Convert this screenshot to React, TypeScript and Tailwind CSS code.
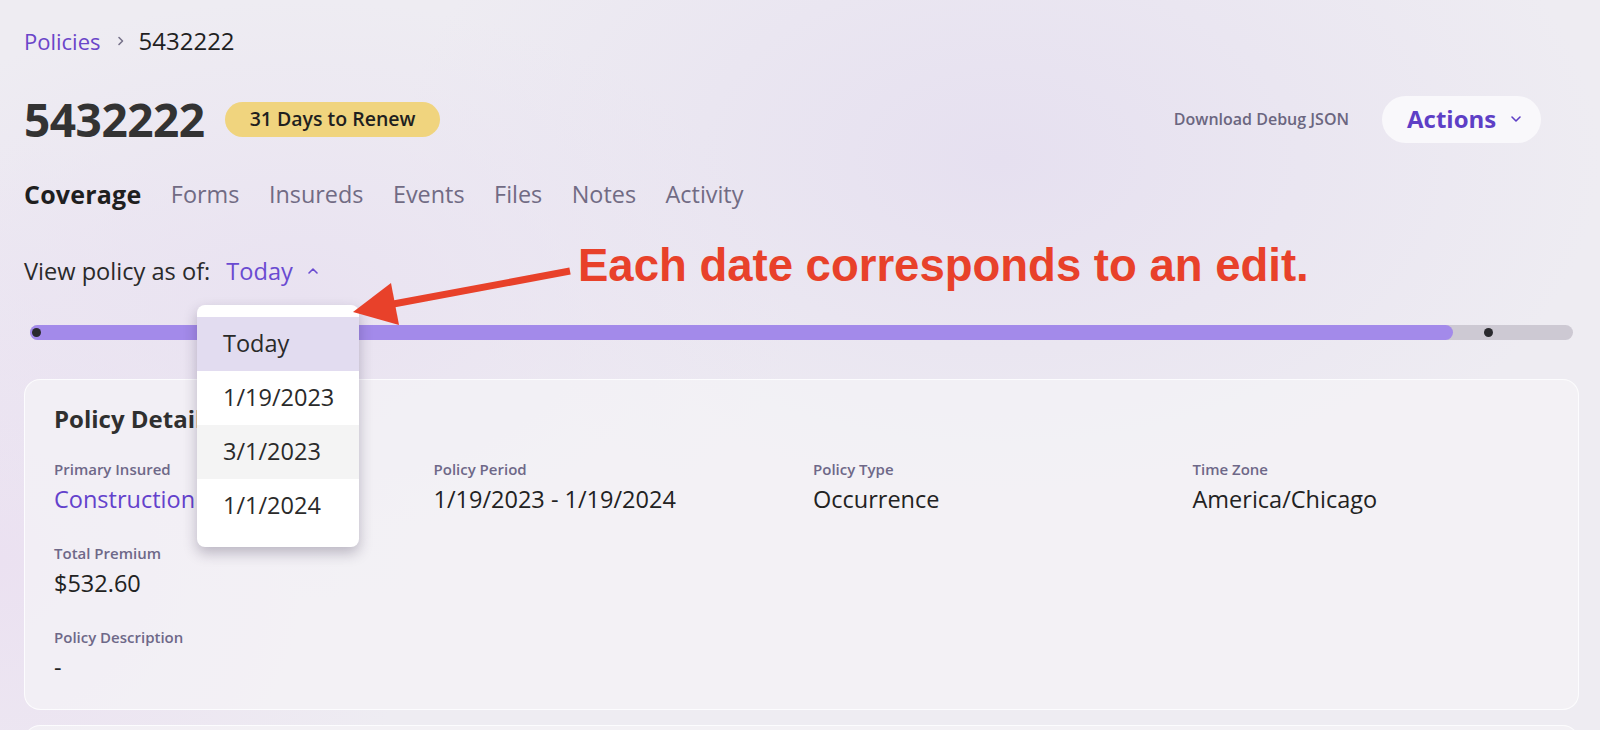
import React from "react";

const ChevronRight = ({ className = "" }: { className?: string }) => (
  <svg className={className} width="8" height="10" viewBox="0 0 8 10" fill="none">
    <path d="M2 1.5L5.5 5L2 8.5" stroke="currentColor" strokeWidth="1.6" strokeLinecap="round" strokeLinejoin="round" />
  </svg>
);
const ChevronUp = ({ className = "" }: { className?: string }) => (
  <svg className={className} width="12" height="8" viewBox="0 0 12 8" fill="none">
    <path d="M2 6L6 2L10 6" stroke="currentColor" strokeWidth="1.6" strokeLinecap="round" strokeLinejoin="round" />
  </svg>
);
const ChevronDown = ({ className = "" }: { className?: string }) => (
  <svg className={className} width="12" height="8" viewBox="0 0 12 8" fill="none">
    <path d="M2 2L6 6L10 2" stroke="currentColor" strokeWidth="1.6" strokeLinecap="round" strokeLinejoin="round" />
  </svg>
);

const Field = ({ label, value, link = false }: { label: string; value: string; link?: boolean }) => (
  <div className="flex flex-col">
    <div className="text-[15px] leading-[20px] font-semibold text-[#6e6888]">{label}</div>
    <div className={`mt-[4px] text-[23.5px] leading-[32px] ${link ? "text-[#6341cc]" : "text-[#222222]"}`}>{value}</div>
  </div>
);

export default function App() {
  const tabs = ["Forms", "Insureds", "Events", "Files", "Notes", "Activity"];
  return (
    <div className="relative w-full h-[730px] overflow-hidden font-['Open_Sans',sans-serif] bg-[#eeecf2]">
      <div className="pointer-events-none absolute inset-0 bg-[radial-gradient(ellipse_600px_380px_at_1000px_160px,#e6e0f0,transparent)]" />
      <div className="pointer-events-none absolute inset-0 bg-[radial-gradient(ellipse_420px_420px_at_0px_560px,#ebe1f1,transparent)]" />
      <div className="pointer-events-none absolute inset-0 bg-[radial-gradient(ellipse_500px_300px_at_300px_300px,#e9e2f1,transparent)]" />

      <div className="relative pl-[24px] pr-[21px] pt-[28px]">
        {/* Breadcrumb */}
        <div className="flex items-center h-[26px] leading-[26px]">
          <span className="text-[22px] text-[#6a45c9]">Policies</span>
          <ChevronRight className="ml-[16px] mr-[14px] text-[#77728a]" />
          <span className="text-[#1f1f1f] text-[24px]">5432222</span>
        </div>

        {/* Title row */}
        <div className="mt-[39px] flex items-center h-[52px]">
          <h1 className="text-[46px] leading-[52px] font-bold text-[#333333] tracking-[-0.5px]">5432222</h1>
          <span className="ml-[20px] inline-flex items-center h-[35px] px-[25px] rounded-full bg-[#f0d47e] text-[19.5px] font-semibold text-[#1f1f1f]">
            31 Days to Renew
          </span>
          <div className="ml-auto mr-[38px] flex items-center">
            <span className="text-[16px] font-semibold text-[#6b6680]">Download Debug JSON</span>
            <button className="ml-[33px] flex items-center h-[47px] w-[159px] pl-[25px] rounded-full bg-[#f9f8fb] text-[24px] font-bold text-[#5e3fc6]">
              Actions
              <ChevronDown className="ml-[14px] text-[#5e3fc6]" />
            </button>
          </div>
        </div>

        {/* Tabs */}
        <div className="mt-[33px] flex items-center gap-[29.5px] h-[32px] text-[23.4px] leading-[32px]">
          <span className="font-bold text-[25px] tracking-[0.2px] text-[#1f1f1f]">Coverage</span>
          {tabs.map((t) => (
            <span key={t} className="text-[#716b84]">{t}</span>
          ))}
        </div>

        {/* View policy as of */}
        <div className="mt-[45px] flex items-center h-[32px] text-[23.6px] leading-[32px]">
          <span className="text-[#2a2a2a]">View policy as of:</span>
          <span className="ml-[16px] text-[#6a4bd1]">Today</span>
          <ChevronUp className="ml-[14px] text-[#6a4bd1]" />
        </div>

        {/* Slider */}
        <div className="mt-[38px] mx-[6px] relative h-[15px] rounded-full bg-[#cdc9d3]">
          <div className="absolute left-0 top-0 h-[15px] w-[1423px] rounded-full bg-[#a38aea]" />
          <div className="absolute left-[2px] top-[3px] w-[9px] h-[9px] rounded-full bg-[#2a2a2e]" />
          <div className="absolute left-[1454px] top-[3px] w-[9px] h-[9px] rounded-full bg-[#2a2a2e]" />
        </div>

        {/* Card */}
        <div className="mt-[39px] h-[331px] rounded-[16px] border border-white/80 bg-[#f5f4f7]/70 pl-[29px] pr-[29px] pt-[23px]">
          <h2 className="text-[24px] leading-[32px] font-bold text-[#2f2f2f]">Policy Details</h2>
          <div className="mt-[24px] grid grid-cols-4 gap-x-[23px] gap-y-[28px]">
            <Field label="Primary Insured" value="Construction Co LLC" link />
            <Field label="Policy Period" value="1/19/2023 - 1/19/2024" />
            <Field label="Policy Type" value="Occurrence" />
            <Field label="Time Zone" value="America/Chicago" />
            <div className="col-span-4">
              <Field label="Total Premium" value="$532.60" />
            </div>
            <div className="col-span-4">
              <Field label="Policy Description" value="-" />
            </div>
          </div>
        </div>

        {/* Next card peeking */}
        <div className="mt-[15px] h-[40px] rounded-t-[16px] border border-white/80 bg-[#f5f4f7]/70" />
      </div>

      {/* Dropdown menu */}
      <div className="absolute left-[197px] top-[305px] w-[162px] h-[242px] rounded-[8px] bg-white pt-[12px] shadow-[0_6px_14px_rgba(40,30,60,0.28)] overflow-hidden">
        {[
          { d: "Today", bg: "bg-[#e2dcf0]" },
          { d: "1/19/2023", bg: "bg-white" },
          { d: "3/1/2023", bg: "bg-[#f4f4f4]" },
          { d: "1/1/2024", bg: "bg-white" },
        ].map((it) => (
          <div key={it.d} className={`h-[54px] flex items-center pl-[26px] text-[23.5px] text-[#2a2a2a] ${it.bg}`}>
            {it.d}
          </div>
        ))}
      </div>

      {/* Annotation arrow */}
      <svg className="pointer-events-none absolute left-0 top-0" width="1600" height="730" viewBox="0 0 1600 730">
        <line x1="570" y1="271" x2="388" y2="305" stroke="#e8412a" strokeWidth="7" strokeLinecap="butt" />
        <polygon points="353,312 391,283 399,325" fill="#e8412a" />
      </svg>
      <div className="pointer-events-none absolute left-[578px] top-[243px] text-[45.5px] leading-[46px] font-bold text-[#e8412a] font-['Liberation_Sans',Arial,sans-serif] whitespace-nowrap">
        Each date corresponds to an edit.
      </div>
    </div>
  );
}
